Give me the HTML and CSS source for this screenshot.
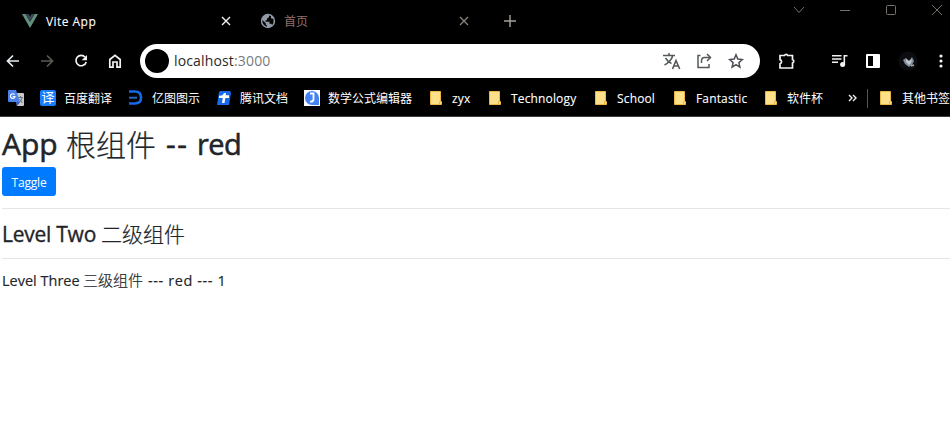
FILE: index.html
```html
<!DOCTYPE html>
<html lang="zh-CN">
<head>
<meta charset="utf-8">
<title>Vite App</title>
<link rel="stylesheet" href="styles.css">
</head>
<body>
<svg class="defs" width="0" height="0">
  <symbol id="folder" viewBox="0 0 16 16"><path d="M2.500 1.500h10v10h1v3h-11z" fill="#ffe08a" stroke="#ecb83f"/><path d="M11.500 14v-2.500h1.500" fill="none" stroke="#ecb83f"/></symbol>
</svg>
<header class="browser">
  <div class="tabs">
    <div class="tab">
      <svg class="fav" width="16" height="16" viewBox="0 0 16 16"><path d="M0 1h3.500L8 8.700 12.500 1H16L8 15z" fill="#64917e"/><path d="M3.500 1h3L8 3.600 9.500 1h3L8 8.700z" fill="#3d4658"/></svg>
      <span class="tab-title first">Vite App</span>
      <svg class="tab-close" width="10" height="10" viewBox="0 0 10 10"><path d="M1 1l8 8M9 1L1 9" stroke="#f2f2f2" stroke-width="1.400"/></svg>
    </div>
    <div class="tab second">
      <svg class="fav" width="16" height="16" viewBox="0 0 16 16"><circle cx="8" cy="8" r="7.200" fill="#919ba8"/><path d="M9 2.500v1.800L7 5.500v1.700H5.500v1.500h4v2h1.700l1 1.300A6 6 0 0 0 13.500 7V6L11 5.300V3zM2.300 7l3.500 3.300v1.300l1.200 1.200v1A6 6 0 0 1 2.300 7z" fill="#050505"/></svg>
      <span class="tab-title dim">首页</span>
      <svg class="tab-close" width="10" height="10" viewBox="0 0 10 10"><path d="M1 1l8 8M9 1L1 9" stroke="#8c8580" stroke-width="1.300"/></svg>
    </div>
    <svg class="new-tab" width="12" height="12" viewBox="0 0 12 12"><path d="M6 0v12M0 6h12" stroke="#a5a09b" stroke-width="1.400"/></svg>
    <div class="window-buttons">
      <svg width="12" height="12" viewBox="0 0 12 12"><path d="M1 3l5 5.500L11 3" fill="none" stroke="#77716c"/></svg>
      <svg width="12" height="12" viewBox="0 0 12 12"><path d="M1 6.500h10" stroke="#77716c"/></svg>
      <svg width="12" height="12" viewBox="0 0 12 12"><rect x="1.500" y="1.500" width="9" height="9" rx="1" fill="none" stroke="#77716c"/></svg>
      <svg width="12" height="12" viewBox="0 0 12 12"><path d="M1 1l10 10M11 1L1 11" stroke="#77716c"/></svg>
    </div>
  </div>
  <div class="toolbar">
    <div class="nav">
      <svg width="14" height="14" viewBox="0 0 14 14"><path d="M13 7H2M7 1.500L1.500 7 7 12.500" fill="none" stroke="#e4eef0" stroke-width="1.700"/></svg>
      <svg width="14" height="14" viewBox="0 0 14 14"><path d="M1 7h11M7 1.500L12.500 7 7 12.500" fill="none" stroke="#5c5955" stroke-width="1.700"/></svg>
      <svg width="14" height="14" viewBox="0 0 14 14"><path d="M11.200 3.200A5.200 5.200 0 1 0 12.200 8" fill="none" stroke="#f2f2f2" stroke-width="1.700"/><path d="M13 1v5.300H7.700z" fill="#f2f2f2"/></svg>
      <svg width="14" height="14" viewBox="0 0 14 14"><path d="M1.800 5.500L7 1.300l5.200 4.200v7.700H9V8H5v5.200H1.800z" fill="none" stroke="#f2f2f2" stroke-width="1.700"/></svg>
    </div>
    <div class="address">
      <span class="site-badge"></span>
      <span class="url">localhost<span class="port">:3000</span></span>
      <div class="address-icons">
        <svg width="20" height="18" viewBox="0 0 20 18"><path d="M1 3.500h12M7 1v2.500M10.800 3.500C10 7 6 11.500 2.500 13M3.500 6C5 8.500 7 10.500 9.500 11.500" fill="none" stroke="#54585b" stroke-width="1.500"/><path d="M10.500 17L14 8.500 17.700 17M11.700 14h4.800" fill="none" stroke="#54585b" stroke-width="1.600"/></svg>
        <svg class="share" width="16" height="16" viewBox="0 0 16 16"><path d="M4.500 2.500H2v12h11V11M5.500 10V8c0-2 1-3.500 3-3.500H14" fill="none" stroke="#54585b" stroke-width="1.500"/><path d="M11 1l3.500 3.500L11 8" fill="none" stroke="#54585b" stroke-width="1.500"/></svg>
        <svg width="16" height="16" viewBox="0 0 16 16"><path d="M8 1.800l1.800 4.300 4.600.4-3.500 3.100 1 4.500L8 11.700l-3.900 2.400 1-4.500-3.500-3.100 4.600-.4z" fill="none" stroke="#4c5054" stroke-width="1.500"/></svg>
      </div>
    </div>
    <svg class="puzzle" width="18" height="18" viewBox="0 0 18 18"><path d="M2 3.500h4.500a1.800 1.800 0 0 1 3.300 0h4.700v4.200a1.700 1.700 0 0 1 0 3.300v5H2v-4.200a2.200 2.200 0 0 0 0-4.200z" fill="none" stroke="#f2f2f2" stroke-width="1.700"/></svg>
    <svg class="media" width="16" height="14" viewBox="0 0 16 14"><path d="M0 1.800h9.500M0 5h9.500M0 8.200h6M12.300 11V1.800H15.500" fill="none" stroke="#f2f2f2" stroke-width="1.600"/><circle cx="10.600" cy="10.500" r="2.500" fill="#f2f2f2"/></svg>
    <svg class="panel" width="14" height="14" viewBox="0 0 14 14"><rect width="14" height="14" rx="1" fill="#fff"/><path d="M2 2h5v10H2z" fill="#000"/></svg>
    <svg class="avatar" width="20" height="20" viewBox="0 0 20 20"><circle cx="10" cy="10" r="9.500" fill="#0b0d10"/><path d="M5 9l3-2 3 3 3-4 2 4-2 4-3 2-4-3z" fill="#7f8d99"/><path d="M8 8l3 2 3-2-1 4-2 2-3-3z" fill="#c0c7ce"/><path d="M13 15l3-1" stroke="#a4a6a8" stroke-width="1.500"/></svg>
    <svg class="menu" width="4" height="14" viewBox="0 0 4 14"><g fill="#f2f2f2"><circle cx="2" cy="2" r="1.600"/><circle cx="2" cy="7" r="1.600"/><circle cx="2" cy="12" r="1.600"/></g></svg>
  </div>
  <nav class="bookmarks">
    <div class="bookmark"><svg width="16" height="16" viewBox="0 0 16 16"><path d="M6 3h9q1 0 1 1v11q0 1-1 1H9z" fill="#c9c9c9"/><path d="M1 0h7l4 12H1q-1 0-1-1V1q0-1 1-1z" fill="#4a83ed"/><path d="M8 12h4l-3 4z" fill="#2e58bd"/><path d="M6.600 4.700A2.300 2.300 0 1 0 7 6.500H4.800" fill="none" stroke="#fff" stroke-width="1.200"/><path d="M10 7.500h5M12.500 6v1.500M14 8c-.5 2-1.500 3-2.500 4M11.500 9l3 4" fill="none" stroke="#68737b"/></svg></div>
    <div class="bookmark"><span class="translate-icon">译</span><span class="label w48">百度翻译</span></div>
    <div class="bookmark"><svg width="16" height="16" viewBox="0 0 16 16"><path d="M1 1.500h6q6 0 6 6t-6 6H1" fill="none" stroke="#1769e8" stroke-width="2.600"/><path d="M1 7.700h8" stroke="#2468c8" stroke-width="2"/></svg><span class="label w48">亿图图示</span></div>
    <div class="bookmark"><svg width="16" height="16" viewBox="0 0 16 16"><path d="M4 1h10l1 2-2 12H1L3 2z" fill="#1769ed"/><path d="M3 5.500q4 1 5-2.500h2l-.3 2.200H13V8H9.300L8.500 13H6l.8-5H3z" fill="#fff"/></svg><span class="label w48">腾讯文档</span></div>
    <div class="bookmark"><svg width="16" height="16" viewBox="0 0 16 16"><path d="M0 0h16v16H0z" fill="#fff"/><path d="M8 1a7 7 0 0 1 7 7v7H8A7 7 0 0 1 8 1z" fill="#4583f4"/><path d="M6 3.500h3.500v6q0 2.300-3.500 2" fill="none" stroke="#fff" stroke-width="1.800"/></svg><span class="label w84">数学公式编辑器</span></div>
    <div class="bookmark"><svg width="16" height="16"><use href="#folder"/></svg><span class="label latin w19">zyx</span></div>
    <div class="bookmark"><svg width="16" height="16"><use href="#folder"/></svg><span class="label latin w66">Technology</span></div>
    <div class="bookmark"><svg width="16" height="16"><use href="#folder"/></svg><span class="label latin w39">School</span></div>
    <div class="bookmark"><svg width="16" height="16"><use href="#folder"/></svg><span class="label latin w51">Fantastic</span></div>
    <div class="bookmark"><svg width="16" height="16"><use href="#folder"/></svg><span class="label w36">软件杯</span></div>
    <svg class="more" width="9" height="8" viewBox="0 0 9 8"><path d="M1 1l3 3-3 3M5 1l3 3-3 3" fill="none" stroke="#f2f2f2" stroke-width="1.400"/></svg>
    <div class="bookmark other"><svg width="16" height="16"><use href="#folder"/></svg><span class="label w48">其他书签</span></div>
  </nav>
</header>
<main>
  <h1><span class="app">App</span><span class="cjk">根组件</span><span class="dash">--</span><span class="red">red</span></h1>
  <button>Taggle</button>
  <section class="level-two"><h3><span class="name">Level Two</span><span class="cjk">二级组件</span></h3></section>
  <section class="level-three"><h5><span class="name">Level Three</span><span class="cjk">三级组件</span><span class="rest">--- red --- 1</span></h5></section>
</main>
</body>
</html>
```
FILE: styles.css
```css
* { box-sizing: border-box; }
body { margin: 0; width: 950px; height: 443px; overflow: hidden; background: #fff; color: #212529; font-family: "Open Sans", "Noto Sans CJK SC", sans-serif; }
svg { display: block; flex: none; }
.defs { position: absolute; }
.browser { height: 117px; background: #000; border-bottom: 1px solid #3c3c3c; overflow: hidden; }
.tabs { display: flex; height: 42px; align-items: center; padding-left: 22px; }
.tab { display: flex; align-items: center; width: 209px; }
.tab.second { margin-left: 29px; }
.tab-title { margin-left: 8px; flex: 1; font-size: 12px; line-height: 18px; color: #fff; white-space: nowrap; }
.tab-title.first { padding-top: 1px; letter-spacing: 0.45px; -webkit-text-stroke: 0.1px; }
.dim { padding-top: 1px; color: #917070; }
.new-tab { margin-left: 35px; }
.window-buttons { display: flex; gap: 34px; margin: -22px 0 0 auto; padding-right: 7px; }
.toolbar { display: flex; align-items: center; height: 38px; }
.nav { display: flex; gap: 20px; width: 140px; padding-left: 6px; flex: none; }
.address { display: flex; align-items: center; width: 620px; height: 34px; flex: none; border-radius: 17px; background: #fff; padding: 0 16px 0 5px; }
.site-badge { width: 24px; height: 24px; border-radius: 50%; background: #000; }
.url { margin-left: 5px; font-size: 14px; line-height: 20px; color: #292929; letter-spacing: 0.15px; }
.port { color: #777b7b; }
.address-icons { display: flex; align-items: center; gap: 15px; margin-left: auto; }
.share { margin: 0 1px 0 -1px; }
.puzzle { margin-left: 18px; }
.media { margin-left: 36px; }
.panel { margin-left: 18px; }
.avatar { margin-left: 18px; }
.menu { margin-left: 21px; }
.bookmarks { display: flex; align-items: center; gap: 16px; height: 36px; padding-left: 8px; }
.bookmark { display: flex; align-items: center; gap: 8px; flex: none; }
.label { display: block; padding-top: 1px; font-size: 12px; line-height: 18px; color: #fff; white-space: nowrap; }
.latin { letter-spacing: 0.15px; -webkit-text-stroke: 0.1px; }
.w19 { width: 19px; }
.w36 { width: 36px; }
.w39 { width: 39px; }
.w48 { width: 48px; }
.w51 { width: 51px; }
.w66 { width: 66px; }
.w84 { width: 84px; }
.translate-icon { width: 16px; height: 16px; border-radius: 2px; background: #177fff; color: #fff; font-size: 13px; line-height: 15px; text-align: center; }
.more { margin-left: 9px; }
.bookmark.other { margin-left: -6px; border-left: 1px solid #555; padding-left: 10px; }
main { padding: 9px 0 0 2px; }
h1, h3, h5 { display: flex; margin: 0; font-weight: 400; white-space: nowrap; }
.cjk { font-family: "Noto Sans CJK SC", sans-serif; font-weight: 300; margin-top: -2px; -webkit-text-stroke: 0.2px; }
h1 { height: 41px; font-size: 30px; line-height: 38px; -webkit-text-stroke: 0.55px; }
h1 .app { width: 64px; }
h1 .dash { margin: -1px 0 0 10px; width: 31px; letter-spacing: 1.5px; }
h1 .red { margin-top: -1px; font-size: 29px; letter-spacing: -0.6px; }
h1 .app { margin-top: -1px; }
button { display: block; width: 54px; height: 29px; padding: 3px 0 0; border: 0; border-radius: 3px; background: #007bff; color: #fff; font: 12px/18px "Open Sans", sans-serif; letter-spacing: -0.2px; }
section { border-top: 1px solid #e5e5e5; }
.level-two { height: 50px; margin-top: 12px; padding-top: 12px; }
h3 { font-size: 21px; line-height: 27px; letter-spacing: -0.25px; -webkit-text-stroke: 0.35px; }
h3 .name { width: 99px; }
h3 .cjk { margin-top: -1px; letter-spacing: 0; }
.level-three { padding-top: 11px; }
h5 { font-size: 14.5px; line-height: 21px; -webkit-text-stroke: 0.15px; }
h5 .name { width: 81px; }
h5 .cjk { font-size: 15px; margin-top: -1px; }
h5 .rest { margin-left: 5px; letter-spacing: 0.6px; }
```
